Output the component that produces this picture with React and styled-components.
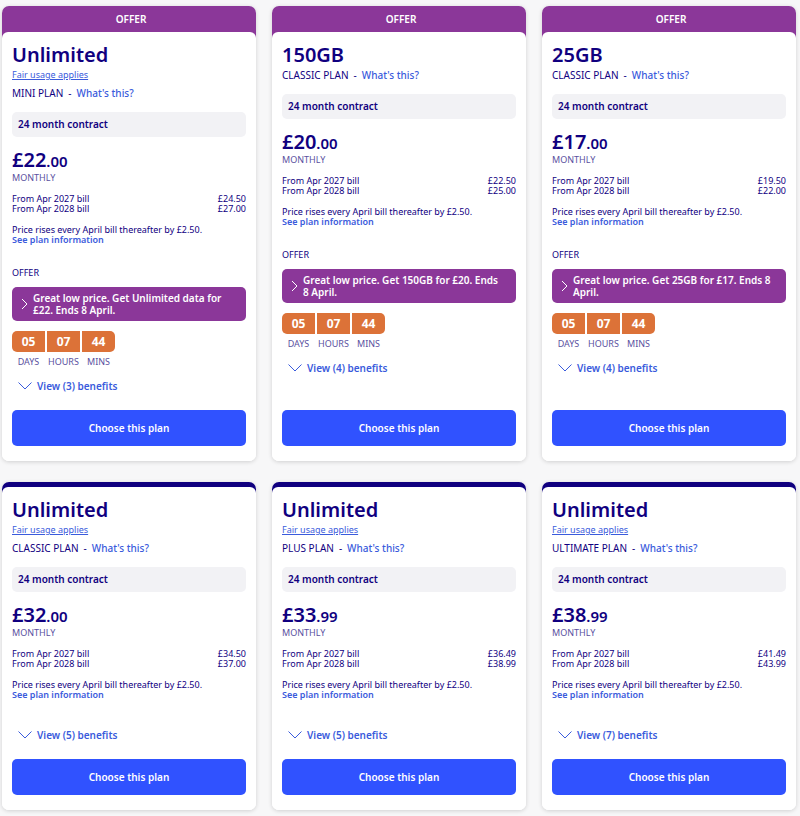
import React from "react";
import styled, { createGlobalStyle } from "styled-components";

const GlobalStyle = createGlobalStyle`
  * {
    box-sizing: border-box;
  }
  body {
    margin: 0;
    background: #f7f7f8;
    color: #10007f;
    font-family: "Noto Sans", "Open Sans", sans-serif;
    font-size: 10px;
    line-height: 12px;
  }
  a {
    color: #3a5bdc;
    text-decoration: none;
  }
  button {
    font-family: inherit;
    border: none;
    cursor: pointer;
  }
`;

const Grid = styled.main`
  display: grid;
  grid-template-columns: repeat(3, minmax(0, 1fr));
  gap: 21px 16px;
  padding: 6px 4px 6px 2px;

  @media (max-width: 700px) {
    grid-template-columns: 1fr;
  }
`;

const Card = styled.article`
  display: flex;
  flex-direction: column;
  overflow: hidden;
  border-radius: 7px;
  background: linear-gradient(${(p) => (p.$offer ? "#8b3799" : "#10007f")} 50px, #fff 50px);
  box-shadow: 0 1px 4px rgba(0, 0, 0, 0.16);
`;

const Ribbon = styled.div`
  height: ${(p) => (p.$offer ? "26px" : "5px")};
  line-height: 26px;
  padding-left: 4px;
  text-align: center;
  font-weight: 600;
  color: #fff;
`;

const Body = styled.div`
  flex: 1;
  display: flex;
  flex-direction: column;
  align-items: stretch;
  padding: 9px 10px 15px;
  border-radius: 6px 6px 0 0;
  background: #fff;
`;

const Title = styled.h2`
  margin: 0;
  font-size: 20px;
  line-height: 28px;
  font-weight: 600;
`;

const FairUsage = styled.a`
  align-self: flex-start;
  margin-bottom: 6px;
  font-size: 9px;
  text-decoration: underline;
`;

const PlanType = styled.div`
  display: flex;
  gap: 5px;

  a {
    font-weight: 500;
  }
`;

const Contract = styled.div`
  margin-top: 13px;
  padding: 0 6px;
  line-height: 25px;
  border-radius: 5px;
  background: #f2f2f5;
  font-weight: 600;
`;

const Price = styled.div`
  margin-top: 12px;
  font-size: 20px;
  line-height: 22px;
  font-weight: 600;
`;

const Pence = styled.span`
  font-size: 15px;
`;

const Monthly = styled.div`
  font-size: 9px;
  color: #5a50a0;
`;

const Bills = styled.table`
  width: 100%;
  margin-top: 10px;
  border-collapse: collapse;
  font-size: 9px;
  line-height: 10px;

  th,
  td {
    padding: 0;
    font-weight: 400;
    text-align: left;
  }
  td {
    text-align: right;
  }
`;

const Note = styled.p`
  margin: 11px 0 0;
  font-size: 9px;
  line-height: 10px;
`;

const InfoLink = styled.a`
  display: block;
  font-weight: 600;
`;

const OfferLabel = styled.div`
  margin-top: 22px;
  font-size: 9px;
`;

const OfferBanner = styled.button`
  display: flex;
  align-items: center;
  gap: 5px;
  margin-top: 8px;
  padding: 5px 12px 5px 9px;
  border-radius: 5px;
  background: #8b3799;
  color: #fff;
  font-size: 10px;
  line-height: 12px;
  font-weight: 600;
  text-align: left;

  svg {
    flex: none;
  }
`;

const Countdown = styled.div`
  display: grid;
  grid-template-columns: repeat(3, 33px);
  gap: 4px 2px;
  margin-top: 10px;
  text-align: center;
  font-size: 9px;
  color: #5a50a0;
`;

const Digits = styled.div`
  line-height: 21px;
  background: #dc7238;
  color: #fff;
  font-size: 12px;
  font-weight: 700;

  &:first-child {
    border-radius: 5px 0 0 5px;
  }
  &:nth-child(3) {
    border-radius: 0 5px 5px 0;
  }
`;

const Benefits = styled.button`
  display: flex;
  align-items: center;
  align-self: flex-start;
  gap: 5px;
  margin: ${(p) => (p.$offer ? "12px" : "29px")} 0 18px;
  padding: 0 6px;
  background: none;
  color: #3a5bdc;
  font-size: 10px;
  line-height: 12px;
  font-weight: 600;
`;

const Choose = styled.button`
  margin-top: auto;
  padding: 0;
  line-height: 36px;
  border-radius: 5px;
  background: #3052ff;
  color: #fff;
  font-size: 10px;
  font-weight: 600;
`;

const plans = [
  {
    title: "Unlimited",
    type: "MINI PLAN",
    pounds: "22",
    pence: "00",
    bills: ["24.50", "27.00"],
    offer: "Great low price. Get Unlimited data for £22. Ends 8 April.",
    benefits: 3,
  },
  {
    title: "150GB",
    type: "CLASSIC PLAN",
    pounds: "20",
    pence: "00",
    bills: ["22.50", "25.00"],
    offer: "Great low price. Get 150GB for £20. Ends 8 April.",
    benefits: 4,
  },
  {
    title: "25GB",
    type: "CLASSIC PLAN",
    pounds: "17",
    pence: "00",
    bills: ["19.50", "22.00"],
    offer: "Great low price. Get 25GB for £17. Ends 8 April.",
    benefits: 4,
  },
  { title: "Unlimited", type: "CLASSIC PLAN", pounds: "32", pence: "00", bills: ["34.50", "37.00"], benefits: 5 },
  { title: "Unlimited", type: "PLUS PLAN", pounds: "33", pence: "99", bills: ["36.49", "38.99"], benefits: 5 },
  { title: "Unlimited", type: "ULTIMATE PLAN", pounds: "38", pence: "99", bills: ["41.49", "43.99"], benefits: 7 },
];

function PlanCard({ plan }) {
  const offer = Boolean(plan.offer);

  return (
    <Card $offer={offer}>
      <Ribbon $offer={offer}>{offer && "OFFER"}</Ribbon>
      <Body>
        <Title>{plan.title}</Title>
        {plan.title === "Unlimited" && <FairUsage href="#fair-usage">Fair usage applies</FairUsage>}
        <PlanType>
          <span>{plan.type}</span>
          <span>-</span>
          <a href="#plan-types">What's this?</a>
        </PlanType>

        <Contract>24 month contract</Contract>

        <Price>
          £{plan.pounds}
          <Pence>.{plan.pence}</Pence>
        </Price>
        <Monthly>MONTHLY</Monthly>

        <Bills>
          <tbody>
            {plan.bills.map((bill, i) => (
              <tr key={bill}>
                <th scope="row">From Apr {2027 + i} bill</th>
                <td>£{bill}</td>
              </tr>
            ))}
          </tbody>
        </Bills>
        <Note>
          Price rises every April bill thereafter by £2.50.
          <InfoLink href="#plan-information">See plan information</InfoLink>
        </Note>

        {offer && (
          <>
            <OfferLabel>OFFER</OfferLabel>
            <OfferBanner type="button">
              <svg width="7" height="12" viewBox="0 0 7 12" fill="none" stroke="#fff">
                <path d="M1 1l5 5-5 5" />
              </svg>
              <span>{plan.offer}</span>
            </OfferBanner>
            <Countdown>
              <Digits>05</Digits>
              <Digits>07</Digits>
              <Digits>44</Digits>
              <span>DAYS</span>
              <span>HOURS</span>
              <span>MINS</span>
            </Countdown>
          </>
        )}

        <Benefits type="button" $offer={offer}>
          <svg width="14" height="8" viewBox="0 0 14 8" fill="none" stroke="#3a5bdc">
            <path d="M0.5 0.5l6.5 6.5 6.5-6.5" />
          </svg>
          View ({plan.benefits}) benefits
        </Benefits>
        <Choose type="button">Choose this plan</Choose>
      </Body>
    </Card>
  );
}

export default function App() {
  return (
    <>
      <GlobalStyle />
      <Grid>
        {plans.map((plan, i) => (
          <PlanCard key={i} plan={plan} />
        ))}
      </Grid>
    </>
  );
}
